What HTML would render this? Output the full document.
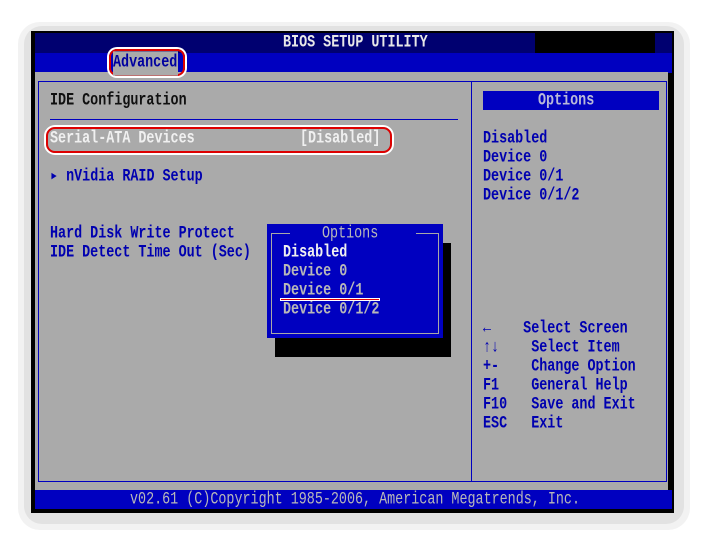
<!DOCTYPE html>
<html><head><style>
body{margin:0;width:704px;height:544px;background:#fff;position:relative;overflow:hidden;font-family:"Liberation Mono","DejaVu Sans Mono",monospace;}
.a{position:absolute;}
.t{position:absolute;font-size:13.4px;line-height:19px;height:19px;white-space:pre;transform:translateY(1px) scaleY(1.28);transform-origin:left center;font-weight:bold;letter-spacing:0px;}
.b{color:#0000b0}
.k{color:#101010}
.g{color:#b8b8b8}
.w{color:#f0f0f0}
</style></head><body>
<div class="a" style="left:18px;top:22px;width:672px;height:508px;border-radius:22px;background:#f2f2f2;"></div>
<div class="a" style="left:24px;top:26px;width:660px;height:498px;border-radius:18px;background:#e2e2e2;"></div>
<div class="a" style="left:31px;top:31px;width:643px;height:482px;background:#000;"></div>
<div class="a" style="left:35px;top:33px;width:500px;height:20px;background:#000070;"></div>
<div class="a" style="left:655px;top:33px;width:17px;height:20px;background:#000070;"></div>
<div class="t" style="left:283px;top:33px;color:#e8e8e8;">BIOS SETUP UTILITY</div>
<div class="a" style="left:35px;top:53px;width:637px;height:20px;background:#0000c0;"></div>
<div class="a" style="left:35px;top:72px;width:633px;height:418px;background:#aaaaaa;"></div>
<div class="a" style="left:38px;top:81px;width:627px;height:399px;border:1px solid #0000c0;"></div>
<div class="a" style="left:471px;top:81px;width:1px;height:400px;background:#0000c0;"></div>
<div class="a" style="left:50px;top:119px;width:408px;height:1px;background:#0000c0;"></div>
<div class="a" style="left:35px;top:490px;width:637px;height:19px;background:#0000c0;"></div>
<div class="t g" style="left:130px;top:490px;font-weight:normal;">v02.61 (C)Copyright 1985-2006, American Megatrends, Inc.</div>

<div class="a" style="left:109px;top:49px;width:72px;height:23px;border:2px solid #d00;border-radius:8px;box-shadow:0 0 0 2px #fff;"></div>
<div class="t" style="left:113px;top:53px;color:#0000a0;background:#aaaaaa;padding-right:1px;">Advanced</div>

<div class="t k" style="left:50px;top:91px;">IDE Configuration</div>
<div class="a" style="left:46px;top:127px;width:342px;height:22px;border:2px solid #d00;border-radius:9px;box-shadow:0 0 0 2px #fff;"></div>
<div class="t w" style="left:50px;top:129px;">Serial-ATA Devices</div>
<div class="t w" style="left:300px;top:129px;">[Disabled]</div>
<div class="t b" style="left:50px;top:167px;">▸ nVidia RAID Setup</div>
<div class="t b" style="left:50px;top:224px;">Hard Disk Write Protect</div>
<div class="t b" style="left:50px;top:243px;">IDE Detect Time Out (Sec)</div>

<div class="a" style="left:483px;top:91px;width:176px;height:19px;background:#0000c0;"></div>
<div class="t" style="left:538px;top:91px;color:#b8b8d8;">Options</div>
<div class="t b" style="left:483px;top:129px;">Disabled</div>
<div class="t b" style="left:483px;top:148px;">Device 0</div>
<div class="t b" style="left:483px;top:167px;">Device 0/1</div>
<div class="t b" style="left:483px;top:186px;">Device 0/1/2</div>
<div class="t b" style="left:483px;top:319px;">←    Select Screen</div>
<div class="t b" style="left:483px;top:338px;">↑↓    Select Item</div>
<div class="t b" style="left:483px;top:357px;">+-    Change Option</div>
<div class="t b" style="left:483px;top:376px;">F1    General Help</div>
<div class="t b" style="left:483px;top:395px;">F10   Save and Exit</div>
<div class="t b" style="left:483px;top:414px;">ESC   Exit</div>

<div class="a" style="left:275px;top:243px;width:176px;height:114px;background:#000;"></div>
<div class="a" style="left:267px;top:224px;width:176px;height:114px;background:#0000c0;"></div>
<div class="a" style="left:271px;top:233px;width:166px;height:99px;border:1px solid #a8a8a8;"></div>
<div class="a" style="left:290px;top:226px;width:126px;height:12px;background:#0000c0;"></div>
<div class="t g" style="left:322px;top:224px;font-weight:normal;">Options</div>
<div class="t w" style="left:283px;top:243px;">Disabled</div>
<div class="t g" style="left:283px;top:262px;">Device 0</div>
<div class="t g" style="left:283px;top:281px;">Device 0/1</div>
<div class="t g" style="left:283px;top:300px;">Device 0/1/2</div>
<div class="a" style="left:280px;top:298px;width:98px;height:1px;background:#d00;border:1px solid #fff;"></div>
</body></html>
